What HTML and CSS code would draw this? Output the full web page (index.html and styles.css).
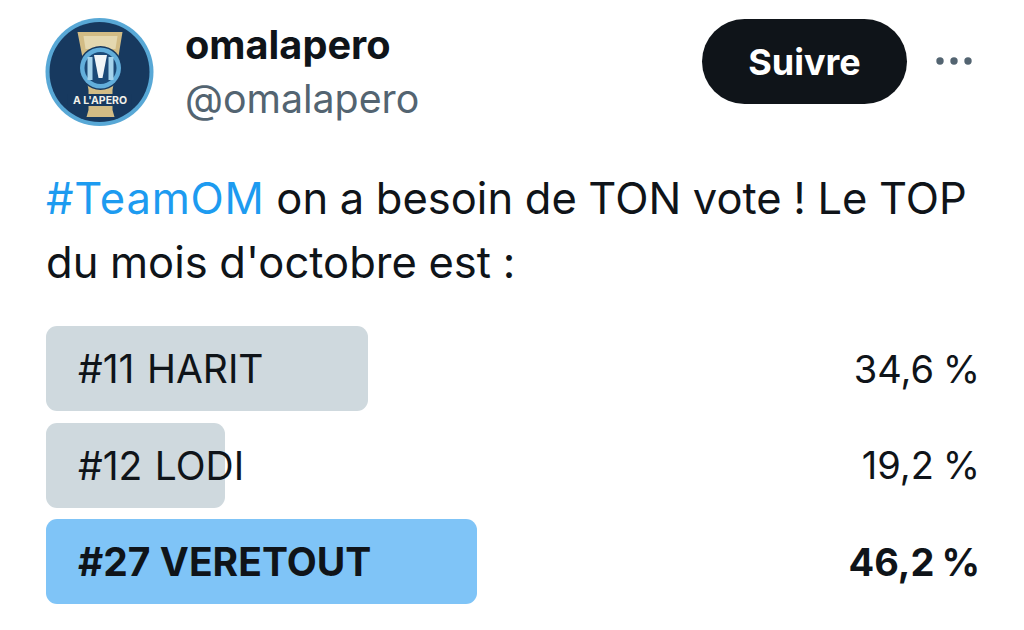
FILE: index.html
```html
<!DOCTYPE html>
<html>
<head>
    <title>omalapero</title>
    <link rel="stylesheet" href="styles.css">
</head>
<body>
    <div class="tweet">
        <div class="header">
            <svg class="avatar" viewBox="0 0 108 108">
                <circle cx="54" cy="54" r="54" fill="#58a8d6"/>
                <circle cx="54" cy="54" r="50" fill="#17395f"/>
                <path d="M32 14 H77 L71 50 L67 72 V92 L69 99 H41 L43 92 V72 L39 50 Z" fill="#d2bc85"/>
                <path d="M38 18 H72 L70 31 H40 Z" fill="#e4d8b0"/>
                <circle cx="55" cy="50" r="22" fill="#17395f"/>
                <circle cx="55" cy="50" r="20.5" fill="#62aedb"/>
                <circle cx="55" cy="50" r="16" fill="#1c4a78"/>
                <path d="M42 39 H47 V62 H42 Z M63 39 H68 V62 H63 Z" fill="#a5d3ec"/>
                <path d="M48.5 37 H61.5 L57 60 H53 Z" fill="#f1f5f7"/>
                <rect x="22" y="76" width="64" height="12" fill="#17395f"/>
                <text class="avatar-text" x="54.5" y="86" text-anchor="middle">A L'APERO</text>
            </svg>
            <div class="names">
                <div class="name">omalapero</div>
                <div class="handle">@omalapero</div>
            </div>
            <button class="follow">Suivre</button>
            <svg class="more" viewBox="0 0 38 10">
                <circle cx="5" cy="5" r="3.7"/>
                <circle cx="19" cy="5" r="3.7"/>
                <circle cx="33" cy="5" r="3.7"/>
            </svg>
        </div>

        <p class="text"><span class="hashtag">#TeamOM</span> on a besoin de TON vote ! Le TOP du mois d'octobre est :</p>

        <div class="poll">
            <div class="option">
                <div class="bar" style="width: 322px"></div>
                <span class="label">#11 HARIT</span>
                <span class="percent">34,6 %</span>
            </div>
            <div class="option">
                <div class="bar" style="width: 179px"></div>
                <span class="label">#12 LODI</span>
                <span class="percent">19,2 %</span>
            </div>
            <div class="option winner">
                <div class="bar" style="width: 431px"></div>
                <span class="label">#27 VERETOUT</span>
                <span class="percent">46,2 %</span>
            </div>
        </div>
    </div>
</body>
</html>
```

FILE: styles.css
```css
body {
    font-family: Inter, "Liberation Sans", sans-serif;
    background-color: #fff;
    color: #0f1419;
    margin: 0;
    padding: 0;
}

.tweet {
    width: 1024px;
    height: 630px;
    box-sizing: border-box;
    padding: 18px 46px 0 46px;
    overflow: hidden;
}

.header {
    display: flex;
    align-items: flex-start;
}

.avatar {
    width: 109px;
    height: 108px;
    margin-left: -1px;
    flex-shrink: 0;
}

.avatar-text {
    font-size: 10.5px;
    font-weight: 700;
    fill: #f1f1ea;
}

.names {
    flex: 1;
    margin-left: 31px;
    margin-top: 4px;
}

.name {
    font-size: 39.7px;
    font-weight: 700;
    line-height: 46px;
}

.handle {
    font-size: 39.3px;
    font-weight: 400;
    line-height: 46px;
    margin-top: 8px;
    color: #536471;
}

.follow {
    width: 205px;
    height: 85px;
    margin-top: 1px;
    border: none;
    border-radius: 43px;
    background-color: #0f1419;
    color: #fff;
    font-family: inherit;
    font-size: 36px;
    font-weight: 700;
}

.more {
    width: 38px;
    height: 10px;
    margin: 38px 5px 0 28px;
    fill: #536471;
}

.text {
    margin: 40px 0 0 0;
    font-size: 43.5px;
    line-height: 64px;
    word-spacing: -0.6px;
}

.hashtag {
    color: #1d9bf0;
    letter-spacing: 0.8px;
}

.poll {
    display: flex;
    flex-direction: column;
    gap: 11.5px;
    margin-top: 32px;
}

.option {
    position: relative;
    display: flex;
    justify-content: space-between;
    align-items: center;
    height: 85px;
    font-size: 39px;
}

.bar {
    position: absolute;
    top: 0;
    left: 0;
    height: 100%;
    border-radius: 11px;
    background-color: #cfd9de;
}

.label {
    position: relative;
    margin-left: 32px;
    word-spacing: 1.5px;
}

.percent {
    position: relative;
    font-size: 38px;
    word-spacing: -2px;
    margin-right: -2px;
}

.winner {
    font-weight: 700;
}

.winner .label {
    word-spacing: 0;
}

.winner .bar {
    background-color: #7fc4f7;
}
```
